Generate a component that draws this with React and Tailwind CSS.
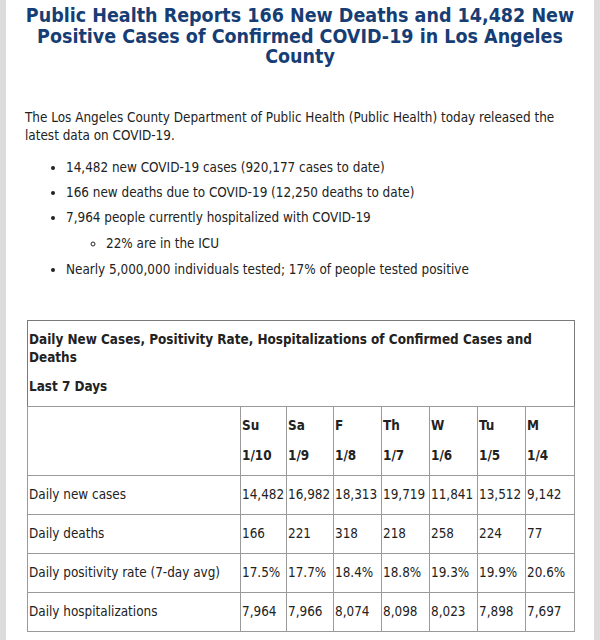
import React from "react";

const days = [
  { d: "Su", date: "1/10" },
  { d: "Sa", date: "1/9" },
  { d: "F", date: "1/8" },
  { d: "Th", date: "1/7" },
  { d: "W", date: "1/6" },
  { d: "Tu", date: "1/5" },
  { d: "M", date: "1/4" },
];

const rows = [
  ["Daily new cases", ["14,482", "16,982", "18,313", "19,719", "11,841", "13,512", "9,142"]],
  ["Daily deaths", ["166", "221", "318", "218", "258", "224", "77"]],
  ["Daily positivity rate (7-day avg)", ["17.5%", "17.7%", "18.4%", "18.8%", "19.3%", "19.9%", "20.6%"]],
  ["Daily hospitalizations", ["7,964", "7,966", "8,074", "8,098", "8,023", "7,898", "7,697"]],
];

const font = { fontFamily: '"DejaVu Sans Condensed", "DejaVu Sans", sans-serif' };

export default function App() {
  return (
    <div className="w-[600px] h-[640px] overflow-hidden bg-[#dcdcdc] px-[6px]" style={font}>
      <div className="h-full bg-white text-[#222] font-stretch-condensed">
        <h1 className="pt-[6px] px-[12px] text-center text-[19.5px] leading-[20.5px] font-bold text-[#163e74]">
          Public Health Reports 166 New Deaths and 14,482 New Positive Cases of Confirmed COVID-19 in Los Angeles County
        </h1>

        <p className="mt-[41px] pl-[19px] pr-[20px] text-[13.4px] leading-[18px]">
          The Los Angeles County Department of Public Health (Public Health) today released the latest data on COVID-19.
        </p>

        <ul className="mt-[14px] pl-[60px] text-[13.4px] leading-[18px] list-disc">
          <li className="mb-[7px]">14,482 new COVID-19 cases (920,177 cases to date)</li>
          <li className="mb-[7px]">166 new deaths due to COVID-19 (12,250 deaths to date)</li>
          <li className="mb-[7px]">
            7,964 people currently hospitalized with COVID-19
            <ul className="mt-[8px] pl-[40px] list-[circle]">
              <li>22% are in the ICU</li>
            </ul>
          </li>
          <li className="mt-[8px]">Nearly 5,000,000 individuals tested; 17% of people tested positive</li>
        </ul>

        <table className="mt-[41px] ml-[21px] w-[548px] table-fixed border-collapse border border-[#7a7a7a] text-[13.4px] leading-[18px]">
          <colgroup>
            <col className="w-[213px]" />
            <col className="w-[46px]" />
            <col className="w-[47px]" />
            <col className="w-[48px]" />
            <col className="w-[48px]" />
            <col className="w-[48px]" />
            <col className="w-[48px]" />
            <col className="w-[49px]" />
          </colgroup>
          <tbody>
            <tr>
              <td colSpan={8} className="pl-px pr-[30px] pt-[10px] pb-[10px] font-bold align-top">
                <p>Daily New Cases, Positivity Rate, Hospitalizations of Confirmed Cases and Deaths</p>
                <p className="mt-[11px]">Last 7 Days</p>
              </td>
            </tr>
            <tr className="h-[69px]">
              <td className="border border-[#9a9a9a]"></td>
              {days.map((x) => (
                <td key={x.d} className="border border-[#9a9a9a] pl-px font-bold align-middle">
                  <p>{x.d}</p>
                  <p className="mt-[12px]">{x.date}</p>
                </td>
              ))}
            </tr>
            {rows.map(([label, vals]) => (
              <tr key={label} className="h-[39px]">
                <td className="border border-[#9a9a9a] pl-px whitespace-nowrap">{label}</td>
                {vals.map((v, i) => (
                  <td key={i} className="border border-[#9a9a9a] pl-px whitespace-nowrap">
                    {v}
                  </td>
                ))}
              </tr>
            ))}
          </tbody>
        </table>
      </div>
    </div>
  );
}
